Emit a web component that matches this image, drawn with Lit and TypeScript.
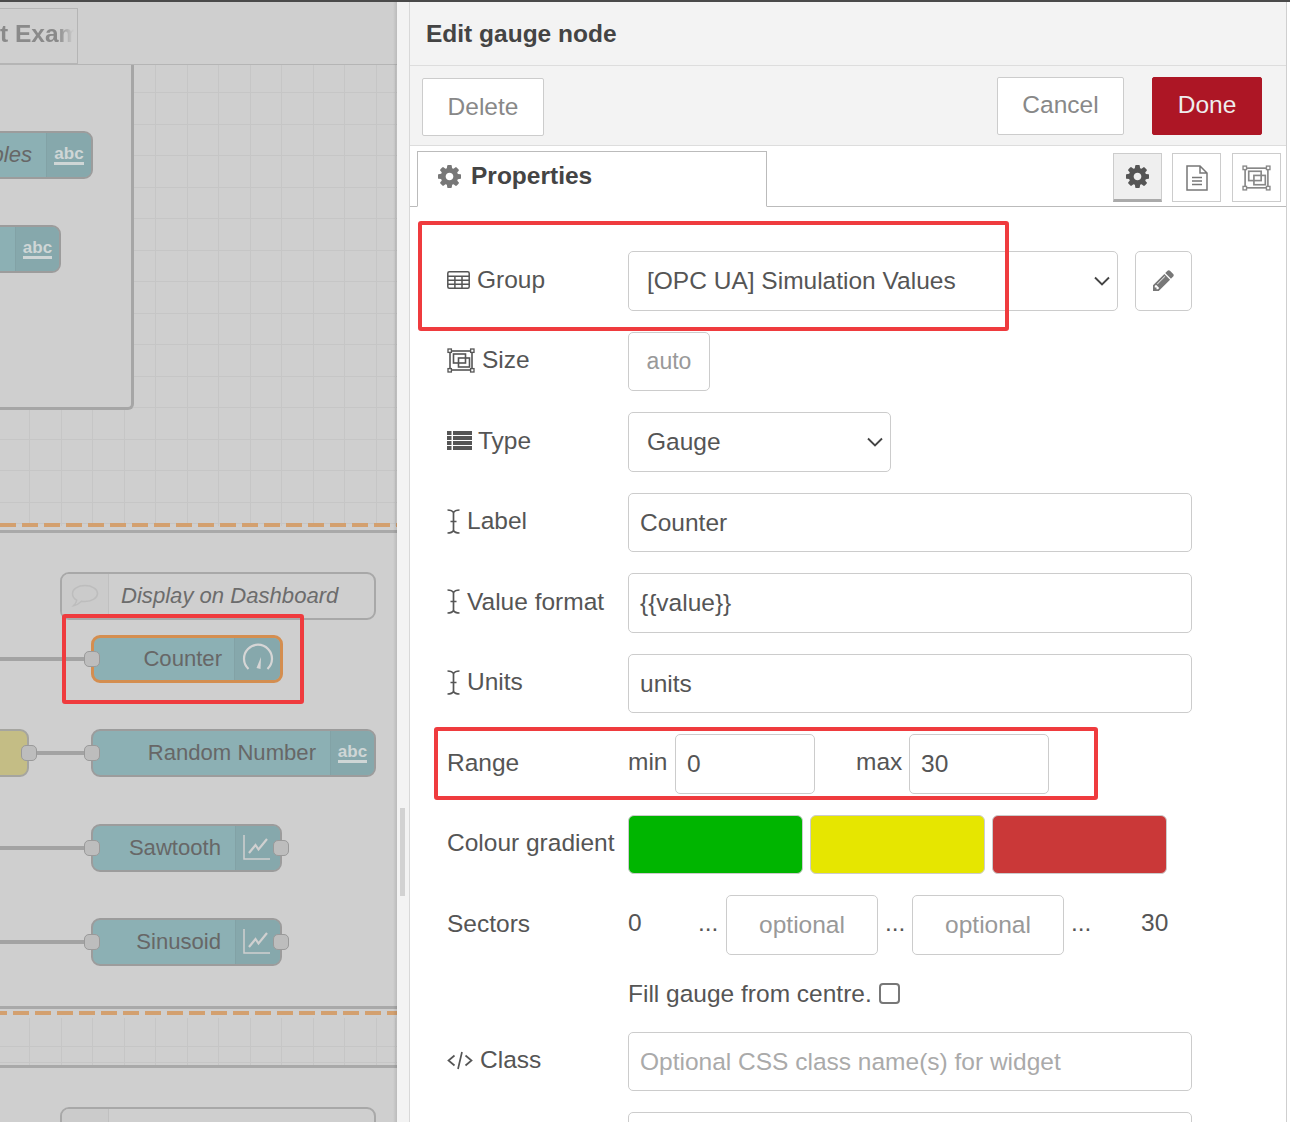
import { LitElement, html, css, svg } from 'lit';
import { customElement } from 'lit/decorators.js';

const COG =
  'M1152 896q0-106-75-181t-181-75-181 75-75 181 75 181 181 75 181-75 75-181zm512-109v222q0 12-8 23t-20 13l-185 28q-19 54-39 91 35 50 107 138 10 12 10 25t-9 23q-27 37-99 108t-94 71q-12 0-26-9l-138-108q-44 23-91 38-16 136-29 186-7 28-36 28h-222q-14 0-24.5-8.5t-11.5-21.5l-28-184q-49-16-90-37l-141 107q-10 9-25 9-14 0-25-11-126-114-165-168-7-10-7-23 0-12 8-23 15-21 51-66.5t54-70.5q-27-50-41-99l-183-27q-13-2-21-12.5t-8-23.5v-222q0-12 8-23t19-13l186-28q14-46 39-92-40-57-107-138-10-12-10-24 0-10 9-23 26-36 98.5-107.5t94.5-71.5q13 0 26 10l138 107q44-23 91-38 16-136 29-186 7-28 36-28h222q14 0 24.5 8.5t11.5 21.5l28 184q49 16 90 37l142-107q9-9 24-9 13 0 25 10 129 119 165 170 7 8 7 22 0 12-8 23-15 21-51 66.5t-54 70.5q26 50 41 98l183 28q13 2 21 12.5t8 23.5z';
const PENCIL =
  'M491 1536l91-91-235-235-91 91v107h128v128h107zm523-928q0-22-22-22-10 0-17 7l-542 542q-7 7-7 17 0 22 22 22 10 0 17-7l542-542q7-7 7-17zm-54-192l416 416-832 832h-416v-416zm683 96q0 53-37 90l-166 166-416-416 166-165q36-38 90-38 53 0 91 38l235 234q37 39 37 91z';

const cog = (size: number, color: string) => html`<svg width=${size} height=${size} viewBox="128 128 1536 1536"><path fill=${color} d=${COG} /></svg>`;

// selection corners + two stacked squares, used for Size and the third tab button
const sizeIcon = (w: number, h: number, color: string) => html`<svg width=${w} height=${h} viewBox="0 0 28 25" fill="none" stroke=${color} stroke-width="1.6">
  <rect x="3" y="3" width="22" height="19" />
  <rect x="6.5" y="6" width="12" height="9" />
  <rect x="11.5" y="10" width="11" height="9" />
  <g fill="#fff" stroke-width="1.3">
    <rect x="1" y="1" width="3.4" height="3.4" /><rect x="23.6" y="1" width="3.4" height="3.4" />
    <rect x="1" y="20.6" width="3.4" height="3.4" /><rect x="23.6" y="20.6" width="3.4" height="3.4" />
  </g>
</svg>`;

const tableIcon = html`<svg width="23" height="18" viewBox="0 0 23 18" fill="none" stroke="#555" stroke-width="1.5">
  <rect x="0.8" y="0.8" width="21.4" height="16.4" rx="1.5" />
  <path d="M0.8 5.2h21.4M0.8 9.3h21.4M0.8 13.3h21.4M7.9 5.2v12M15 5.2v12" />
</svg>`;

const listIcon = html`<svg width="25" height="19" viewBox="0 0 25 19" fill="#555">
  <rect x="0" y="0" width="4.5" height="4" /><rect x="6" y="0" width="19" height="4" />
  <rect x="0" y="5" width="4.5" height="4" /><rect x="6" y="5" width="19" height="4" />
  <rect x="0" y="10" width="4.5" height="4" /><rect x="6" y="10" width="19" height="4" />
  <rect x="0" y="15" width="4.5" height="4" /><rect x="6" y="15" width="19" height="4" />
</svg>`;

const cursorIcon = html`<svg width="13" height="25" viewBox="0 0 13 25" fill="none" stroke="#555" stroke-width="1.7">
  <path d="M0.5 1q4.5 0 6 2.5q1.500-2.500 6-2.500M6.500 3v19M0.500 24q4.500 0 6-2.500q1.500 2.500 6 2.500M3.500 12.500h6" />
</svg>`;

const codeIcon = html`<svg width="26" height="19" viewBox="0 0 26 19" fill="none" stroke="#555" stroke-width="1.7">
  <path d="M7.500 4.500L1.500 9.500L7.500 14.500M18.500 4.500L24.500 9.500L18.500 14.500M15 1L11 18" />
</svg>`;

const chevron = html`<svg width="16" height="10" viewBox="0 0 16 10" fill="none" stroke="#444" stroke-width="1.900"><path d="M1 1.500L8 8.500L15 1.500" /></svg>`;

const fileIcon = html`<svg width="22" height="26" viewBox="0 0 22 26" fill="none" stroke="#777" stroke-width="1.500">
  <path d="M1 1h13l7 7v17H1zM14 1v7h7" />
  <path d="M6 12.500h10M6 16h10M6 19.500h10" />
</svg>`;

const gaugeIcon = svg`<path d="M6.500 26A14 14 0 1 1 25.500 26" fill="none" stroke="#d6d6d6" stroke-width="2.200" />
  <path d="M14.500 25L19 14L18.500 26Z" fill="#d6d6d6" />`;
const chartIcon = svg`<path d="M2 3V27H28" fill="none" stroke="#d0d0d0" stroke-width="1.500" />
  <path d="M7 21L13.500 13L16.500 17.500L25 7" fill="none" stroke="#d0d0d0" stroke-width="2.200" />`;

interface FlowNode {
  label: string;
  x: number;
  y: number;
  w: number;
  divider: number;
  icon: 'abc' | 'gauge' | 'chart';
  selected?: boolean;
  italic?: boolean;
  inPort?: boolean;
  outPort?: boolean;
  wire?: number;
}

const NODES: FlowNode[] = [
  { label: 'bles', x: -120, y: 131, w: 213, divider: 165, icon: 'abc', italic: true },
  { label: '', x: -120, y: 225, w: 181, divider: 134, icon: 'abc' },
  { label: 'Counter', x: 91, y: 635, w: 192, divider: 143, icon: 'gauge', selected: true, inPort: true, wire: 84 },
  { label: 'Random Number', x: 91, y: 729, w: 285, divider: 238, icon: 'abc', inPort: true },
  { label: 'Sawtooth', x: 91, y: 824, w: 191, divider: 143, icon: 'chart', inPort: true, outPort: true, wire: 84 },
  { label: 'Sinusoid', x: 91, y: 918, w: 191, divider: 143, icon: 'chart', inPort: true, outPort: true, wire: 84 },
];

@customElement('app-root')
export class AppRoot extends LitElement {
  static styles = css`
    :host {
      display: block;
      width: 1290px;
      height: 1122px;
      overflow: hidden;
      position: relative;
      background: #fff;
      font-family: 'Liberation Sans', Arial, sans-serif;
      font-size: 24.5px;
      color: #555;
    }
    .app {
      display: flex;
      height: 1122px;
      border-top: 2px solid #4a4a4a;
      box-sizing: border-box;
    }

    /* flow canvas: nodes are placed freely */
    .canvas {
      position: relative;
      flex: 0 0 397px;
      height: 100%;
      overflow: hidden;
      background: #cfcfcf;
    }
    .canvas::after {
      content: '';
      position: absolute;
      top: 0;
      bottom: 0;
      right: 0;
      width: 4px;
      background: linear-gradient(to right, transparent, rgba(0, 0, 0, 0.1));
    }
    .grid {
      position: absolute;
      background-color: #cfcfcf;
      background-image:
        repeating-linear-gradient(to right, #c6c6c6 0 1px, transparent 1px 31.5px),
        repeating-linear-gradient(to bottom, #c6c6c6 0 1px, transparent 1px 31.5px);
    }
    .tab-strip {
      position: absolute;
      left: 0;
      top: 0;
      right: 0;
      height: 62px;
      border-bottom: 1px solid #b5b5b5;
      background: #cfcfcf;
    }
    .flow-tab {
      position: absolute;
      left: 0;
      top: 6px;
      width: 78px;
      height: 56px;
      border: 1px solid #b5b5b5;
      border-left: 0;
      box-sizing: border-box;
      font-weight: 700;
      line-height: 49px;
      color: #8a8a8a;
      white-space: nowrap;
    }
    .flow-tab span {
      display: block;
      width: 74px;
      overflow: hidden;
      -webkit-mask-image: linear-gradient(to right, #000 58px, transparent 74px);
      mask-image: linear-gradient(to right, #000 58px, transparent 74px);
    }
    .group-frame {
      position: absolute;
      left: -10px;
      top: 62px;
      width: 144px;
      height: 346px;
      background: #cfcfcf;
      border: 3px solid #a6a6a6;
      border-top: 0;
      border-radius: 0 0 6px 0;
      box-sizing: border-box;
    }
    .band {
      position: absolute;
      left: 0;
      right: 0;
      background: #cfcfcf;
    }
    .line {
      position: absolute;
      left: 0;
      right: 0;
      height: 3px;
      background: #a9a9a9;
    }
    .dash {
      position: absolute;
      left: 0;
      right: 0;
      height: 4px;
      background-image: repeating-linear-gradient(to right, #d3a06f 0 16px, transparent 16px 22px);
    }
    .node {
      position: absolute;
      height: 48px;
      box-sizing: border-box;
      background: #8cb0b4;
      border: 2px solid #9c9c9c;
      border-radius: 9px;
      color: #676767;
    }
    .node.selected {
      border: 3px solid #d48e50;
    }
    .node .name {
      position: absolute;
      top: 0;
      bottom: 0;
      display: flex;
      align-items: center;
      justify-content: flex-end;
      font-size: 22.1px;
      white-space: nowrap;
      left: 0;
    }
    .node .name.italic {
      font-style: italic;
    }
    .node .icon {
      position: absolute;
      top: 0;
      bottom: 0;
      right: 0;
      display: flex;
      align-items: center;
      justify-content: center;
      background: #86a8ac;
      border-left: 1px solid #82a2a6;
      border-radius: 0 7px 7px 0;
    }
    .abc {
      font-size: 17px;
      font-weight: 700;
      line-height: 17px;
      color: #cfd6d6;
      border-bottom: 3px solid #cfd6d6;
      padding-bottom: 0;
    }
    .port {
      position: absolute;
      width: 16px;
      height: 16px;
      box-sizing: border-box;
      background: #bdbdbd;
      border: 1px solid #9a9a9a;
      border-radius: 5px;
    }
    .wire {
      position: absolute;
      height: 4px;
      background: #a3a3a3;
    }
    .comment {
      position: absolute;
      left: 60px;
      width: 316px;
      height: 48px;
      box-sizing: border-box;
      display: flex;
      align-items: center;
      border: 2px solid #a8a8a8;
      border-radius: 9px;
      background: #cfcfcf;
      color: #6c6c6c;
      font-size: 22.1px;
      font-style: italic;
      white-space: nowrap;
    }
    .comment .bubble {
      flex: 0 0 46px;
      align-self: stretch;
      display: flex;
      align-items: center;
      justify-content: center;
      border-right: 1px solid #c0c0c0;
      background: #cbcbcb;
      border-radius: 7px 0 0 7px;
      margin-right: 12px;
    }
    .yellow {
      position: absolute;
      left: -10px;
      top: 727px;
      width: 39px;
      height: 48px;
      box-sizing: border-box;
      background: #c4bd85;
      border: 2px solid #a5a5a0;
      border-radius: 9px;
    }

    /* strip between canvas and tray, holds the separator handle */
    .strip {
      position: relative;
      flex: 0 0 13px;
      background: #f3f3f3;
      border-right: 1px solid #d8d8d8;
      box-sizing: border-box;
    }
    .handle {
      position: absolute;
      left: 3px;
      top: 806px;
      width: 5px;
      height: 88px;
      background: #d2d2d2;
    }

    /* edit tray */
    .tray {
      flex: 0 0 877px;
      display: flex;
      flex-direction: column;
      border-right: 1px solid #cfcfcf;
      box-sizing: border-box;
      min-height: 0;
    }
    .title {
      flex: none;
      height: 64px;
      display: flex;
      align-items: center;
      padding-left: 16px;
      background: #f3f3f3;
      border-bottom: 1px solid #ddd;
      font-weight: 700;
      color: #444;
      box-sizing: border-box;
    }
    .actions {
      flex: none;
      height: 80px;
      display: flex;
      align-items: center;
      padding: 0 24px 0 12px;
      background: #f3f3f3;
      border-bottom: 1px solid #ddd;
      box-sizing: border-box;
    }
    .btn {
      height: 58px;
      display: flex;
      align-items: center;
      justify-content: center;
      box-sizing: border-box;
      background: #fff;
      border: 1px solid #ccc;
      border-radius: 2px;
      color: #888;
      padding-bottom: 1px;
    }
    .btn.delete {
      width: 122px;
      margin-top: 2px;
      padding: 1px 0 0;
    }
    .btn.cancel {
      width: 127px;
      margin-left: auto;
    }
    .btn.done {
      width: 110px;
      margin-left: 28px;
      background: #ad1625;
      border-color: #ad1625;
      color: #eee;
    }
    .tabs {
      flex: none;
      height: 61px;
      display: flex;
      align-items: flex-end;
      padding: 0 5px 0 7px;
      border-bottom: 1px solid #bbb;
      box-sizing: border-box;
    }
    .tab {
      width: 350px;
      height: 56px;
      margin-bottom: -1px;
      display: flex;
      align-items: center;
      gap: 10px;
      padding: 0 0 6px 20px;
      box-sizing: border-box;
      background: #fff;
      border: 1px solid #bbb;
      border-bottom-color: #fff;
      font-weight: 700;
      color: #444;
    }
    .tab-btn {
      width: 49px;
      height: 49px;
      margin-bottom: 4px;
      display: flex;
      align-items: center;
      justify-content: center;
      box-sizing: border-box;
      border: 1px solid #ccc;
      background: #fff;
    }
    .tab-btn.first {
      margin-left: auto;
      background: #efefef;
      border-bottom: 3px solid #aaa;
    }
    .tab-btn.second {
      margin-left: 10px;
    }
    .tab-btn.third {
      margin-left: 11px;
    }
    .form {
      flex: none;
      display: flex;
      flex-direction: column;
      gap: 21px;
      padding: 44px 0 0 37px;
    }
    .row {
      display: grid;
      grid-template-columns: 181px 1fr;
      align-items: center;
      height: 60px;
      flex: none;
    }
    .row.short {
      height: 59px;
    }
    .row.fill {
      height: 35px;
    }
    .lbl {
      display: flex;
      align-items: center;
      gap: 7px;
      white-space: nowrap;
      padding-bottom: 3px;
    }
    .lbl.tight {
      gap: 6px;
    }
    .ctl {
      display: flex;
      align-items: center;
      height: 100%;
      min-width: 0;
    }
    .box {
      height: 100%;
      display: flex;
      align-items: center;
      box-sizing: border-box;
      border: 1px solid #ccc;
      border-radius: 5px;
      background: #fff;
      padding-left: 11px;
      color: #555;
      white-space: nowrap;
    }
    .box.full {
      width: 564px;
    }
    .box.placeholder {
      color: #aaa;
    }
    .box.center {
      justify-content: center;
      padding-left: 0;
      color: #999;
    }
    .box.select {
      justify-content: space-between;
      padding: 0 7px 0 18px;
    }
    .box.group {
      width: 490px;
    }
    .box.type {
      width: 263px;
    }
    .box.auto {
      width: 82px;
      font-size: 23px;
    }
    .box.num {
      width: 140px;
    }
    .box.opt {
      width: 152px;
    }
    .box.pencil {
      width: 57px;
      margin-left: 17px;
      justify-content: center;
      padding: 0 0 2px;
    }
    .word {
      flex: none;
      padding-bottom: 4px;
      box-sizing: border-box;
    }
    .swatches {
      display: flex;
      gap: 7px;
      height: 100%;
    }
    .swatch {
      width: 175px;
      height: 100%;
      box-sizing: border-box;
      border: 1px solid #ccc;
      border-radius: 6px;
    }
    .checkbox {
      width: 21px;
      height: 21px;
      margin-left: 7px;
      box-sizing: border-box;
      border: 2px solid #777;
      border-radius: 4px;
    }

    /* red annotation rectangles drawn over the screenshot */
    .mark {
      position: absolute;
      box-sizing: border-box;
      border: 4px solid #ef3b3e;
      border-radius: 3px;
      pointer-events: none;
    }
  `;

  private renderNode(n: FlowNode) {
    const iconWidth = n.w - n.divider;
    const cy = n.y + 24;
    return html`
      ${n.wire ? html`<div class="wire" style="left:0;top:${cy - 4}px;width:${n.wire}px"></div>` : ''}
      <div class="node ${n.selected ? 'selected' : ''}" style="left:${n.x}px;top:${n.y - 2}px;width:${n.w}px">
        <div class="name ${n.italic ? 'italic' : ''}" style="width:${n.divider - 15}px">${n.label}</div>
        <div class="icon" style="width:${iconWidth - 4}px">
          ${n.icon === 'abc'
            ? html`<span class="abc">abc</span>`
            : html`<svg width="32" height="32" viewBox="0 0 32 32">${n.icon === 'gauge' ? gaugeIcon : chartIcon}</svg>`}
        </div>
      </div>
      ${n.inPort ? html`<div class="port" style="left:${n.x - 7}px;top:${cy - 10}px"></div>` : ''}
      ${n.outPort ? html`<div class="port" style="left:${n.x + n.w - 9}px;top:${cy - 10}px"></div>` : ''}
    `;
  }

  private renderCanvas() {
    return html`
      <div class="canvas">
        <div class="grid" style="left:0;top:62px;width:397px;height:462px;background-position:-2px -3px"></div>
        <div class="group-frame"></div>
        <div class="tab-strip"><div class="flow-tab"><span>t Exam</span></div></div>
        <div class="dash" style="top:521px"></div>
        <div class="band" style="top:527px;height:477px"></div>
        <div class="line" style="top:528px"></div>
        <div class="line" style="top:1004px"></div>
        <div class="dash" style="top:1009px;background-position:-9px 0"></div>
        <div class="grid" style="left:0;top:1016px;width:397px;height:47px;background-position:-2px -3px"></div>
        <div class="band" style="top:1063px;height:60px"></div>
        <div class="line" style="top:1063px"></div>

        <div class="comment" style="top:570px">
          <span class="bubble">
            <svg width="28" height="24" viewBox="0 0 28 24" fill="none" stroke="#bdbdbd" stroke-width="1.500">
              <path d="M14 1.500c7 0 12.500 3.500 12.500 8s-5.500 8-12.500 8c-1.500 0-2.500 0-3.500-.3c-2 2-5 4-8 4.500c1.500-1.500 3-3.500 3.200-5.500C3 14.700 1.500 12.300 1.500 9.500c0-4.500 5.500-8 12.500-8z" />
            </svg>
          </span>
          Display on Dashboard
        </div>
        <div class="yellow"></div>
        <div class="wire" style="left:37px;top:749px;width:47px"></div>
        <div class="port" style="left:21px;top:743px"></div>
        ${NODES.map((n) => this.renderNode(n))}
        <div class="comment" style="top:1105px"><span class="bubble"></span></div>
        <div class="mark" style="left:62px;top:612px;width:242px;height:90px"></div>
      </div>
    `;
  }

  private renderForm() {
    return html`
      <div class="form">
        <div class="row">
          <div class="lbl">${tableIcon}Group</div>
          <div class="ctl">
            <div class="box select group">[OPC UA] Simulation Values ${chevron}</div>
            <div class="box pencil">
              <svg width="21" height="21" viewBox="128 128 1536 1536"><path fill="#777" d=${PENCIL} /></svg>
            </div>
          </div>
        </div>
        <div class="row short">
          <div class="lbl">${sizeIcon(28, 25, '#555')}Size</div>
          <div class="ctl"><div class="box center auto">auto</div></div>
        </div>
        <div class="row">
          <div class="lbl tight">${listIcon}Type</div>
          <div class="ctl"><div class="box select type">Gauge ${chevron}</div></div>
        </div>
        <div class="row short">
          <div class="lbl">${cursorIcon}Label</div>
          <div class="ctl"><div class="box full">Counter</div></div>
        </div>
        <div class="row">
          <div class="lbl">${cursorIcon}Value format</div>
          <div class="ctl"><div class="box full">{{value}}</div></div>
        </div>
        <div class="row short">
          <div class="lbl">${cursorIcon}Units</div>
          <div class="ctl"><div class="box full">units</div></div>
        </div>
        <div class="row">
          <div class="lbl">Range</div>
          <div class="ctl">
            <span class="word" style="width:47px">min</span>
            <div class="box num">0</div>
            <span class="word" style="width:53px;margin-left:41px">max</span>
            <div class="box num">30</div>
          </div>
        </div>
        <div class="row short">
          <div class="lbl">Colour gradient</div>
          <div class="ctl">
            <div class="swatches">
              <div class="swatch" style="background:#00b500"></div>
              <div class="swatch" style="background:#e6e600"></div>
              <div class="swatch" style="background:#ca3838"></div>
            </div>
          </div>
        </div>
        <div class="row">
          <div class="lbl">Sectors</div>
          <div class="ctl">
            <span class="word" style="width:70px">0</span>
            <span class="word" style="width:28px">...</span>
            <div class="box center opt placeholder">optional</div>
            <span class="word" style="width:27px;margin-left:7px">...</span>
            <div class="box center opt placeholder">optional</div>
            <span class="word" style="width:70px;margin-left:7px">...</span>
            <span class="word">30</span>
          </div>
        </div>
        <div class="row fill">
          <div></div>
          <div class="ctl"><span>Fill gauge from centre.</span><span class="checkbox"></span></div>
        </div>
        <div class="row short">
          <div class="lbl">${codeIcon}Class</div>
          <div class="ctl"><div class="box full placeholder">Optional CSS class name(s) for widget</div></div>
        </div>
        <div class="row"><div></div><div class="ctl"><div class="box full"></div></div></div>
      </div>
    `;
  }

  render() {
    return html`
      <div class="app">
        ${this.renderCanvas()}
        <div class="strip"><div class="handle"></div></div>
        <div class="tray">
          <div class="title">Edit gauge node</div>
          <div class="actions">
            <div class="btn delete">Delete</div>
            <div class="btn cancel">Cancel</div>
            <div class="btn done">Done</div>
          </div>
          <div class="tabs">
            <div class="tab">${cog(23, '#777')}Properties</div>
            <div class="tab-btn first">${cog(23, '#555')}</div>
            <div class="tab-btn second">${fileIcon}</div>
            <div class="tab-btn third">${sizeIcon(29, 26, '#888')}</div>
          </div>
          ${this.renderForm()}
        </div>
      </div>
      <div class="mark" style="left:418px;top:221px;width:591px;height:110px"></div>
      <div class="mark" style="left:434px;top:727px;width:664px;height:73px"></div>
    `;
  }
}

declare global {
  interface HTMLElementTagNameMap {
    'app-root': AppRoot;
  }
}
